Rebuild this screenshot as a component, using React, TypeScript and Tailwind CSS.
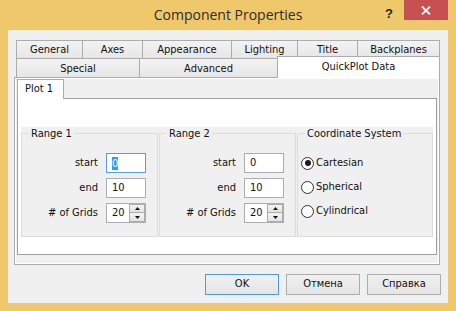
import React from 'react';

const ui = "font-['DejaVu_Sans_Condensed','Liberation_Sans',sans-serif] text-[11px] text-[#111]";

const Tab = ({ label, className }: { label: string; className: string }) => (
    <div className={`h-full flex items-center justify-center border-t border-l border-[#ACACAC] bg-gradient-to-b from-[#F3F3F3] to-[#E6E6E6] leading-none ${className}`}>
        {label}
    </div>
);

const Field = ({ label, value, focused, spin }: { label: string; value: string; focused?: boolean; spin?: boolean }) => (
    <div className="flex items-center justify-end gap-[8px] pr-[11px] h-[20px]">
        <span>{label}</span>
        <div className={`relative w-[40px] h-[20px] bg-white border flex items-center pl-[5px] ${focused ? 'border-[#569DE5]' : 'border-[#ABADB3]'}`}>
            {focused ? <span className="bg-[#3399FF] text-white leading-[13px]">{value}</span> : <span>{value}</span>}
            {spin && (
                <div className="absolute right-0 top-0 bottom-0 w-[16px] flex flex-col">
                    <div className="h-[9px] border border-[#ACACAC] bg-gradient-to-b from-[#F4F4F4] to-[#E3E3E3] flex items-center justify-center">
                        <svg width="5" height="3" viewBox="0 0 5 3"><path d="M0 3 L2.5 0 L5 3 Z" fill="#111" /></svg>
                    </div>
                    <div className="h-[9px] border border-t-0 border-[#ACACAC] bg-gradient-to-b from-[#F4F4F4] to-[#E3E3E3] flex items-center justify-center">
                        <svg width="5" height="3" viewBox="0 0 5 3"><path d="M0 0 L2.5 3 L5 0 Z" fill="#111" /></svg>
                    </div>
                </div>
            )}
        </div>
    </div>
);

const RangeGroup = ({ title, focused, className }: { title: string; focused?: boolean; className: string }) => (
    <fieldset className={`border border-[#DCDCDC] h-[110px] ${className}`}>
        <legend className="ml-[7px] px-[2px] leading-[13px]">{title}</legend>
        <div className="flex flex-col gap-[5px] pt-[13px]">
            <Field label="start" value="0" focused={focused} />
            <Field label="end" value="10" />
            <Field label="# of Grids" value="20" spin />
        </div>
    </fieldset>
);

const Radio = ({ label, checked }: { label: string; checked?: boolean }) => (
    <div className="h-[24px] flex items-center gap-[2px] pl-[3px]">
        <div className="w-[13px] h-[13px] rounded-full border border-[#333] bg-white flex items-center justify-center">
            {checked && <div className="w-[6px] h-[6px] rounded-full bg-[#1A1A1A]" />}
        </div>
        <span>{label}</span>
    </div>
);

const Button = ({ label, primary }: { label: string; primary?: boolean }) => (
    <button className={`w-[74px] h-[21px] border bg-gradient-to-b from-[#F0F0F0] to-[#E5E5E5] flex items-center justify-center ${primary ? 'border-[#4A9BE0]' : 'border-[#ACACAC]'}`}>
        {label}
    </button>
);

export default function App() {
    return (
        <div className={`w-[456px] h-[311px] bg-[#EFC86B] flex flex-col ${ui}`}>
            <div className="relative h-[30px] flex items-center justify-center">
                <span className="font-['Open_Sans',sans-serif] text-[14px] text-[#2B2B2B] pb-[1px]">Component Properties</span>
                <span className="absolute left-[385px] top-[4px] font-['Liberation_Sans',sans-serif] font-bold text-[13px] text-[#222]">?</span>
                <div className="absolute right-[8px] top-0 w-[44px] h-[20px] bg-[#C75050] flex items-center justify-center">
                    <svg width="10" height="9" viewBox="0 0 10 9">
                        <path d="M1 0.5 L9 8.5 M9 0.5 L1 8.5" stroke="#fff" strokeWidth="1.8" />
                    </svg>
                </div>
            </div>

            <div className="mx-[8px] h-[273px] bg-[#F0F0F0] flex flex-col">
                <div className="mt-[10px] ml-[6px] w-[426px] flex flex-col">
                    <div className="flex pl-[2px] h-[18px]">
                        <Tab label="General" className="w-[66px]" />
                        <Tab label="Axes" className="w-[60px]" />
                        <Tab label="Appearance" className="w-[89px]" />
                        <Tab label="Lighting" className="w-[66px]" />
                        <Tab label="Title" className="w-[60px]" />
                        <Tab label="Backplanes" className="w-[83px] border-r" />
                    </div>
                    <div className="flex pl-[2px] h-[19px]">
                        <Tab label="Special" className="w-[123px]" />
                        <Tab label="Advanced" className="w-[138px]" />
                        <div className="relative z-10 w-[163px] h-[22px] -mt-[2px] bg-white border-t border-l border-r border-[#ACACAC] flex items-center justify-center">
                            QuickPlot Data
                        </div>
                    </div>
                    <div className="h-[188px] border border-[#ACACAC] bg-white p-[1px]">
                        <div className="h-full bg-[#F0F0F0] pl-[1px] flex flex-col">
                            <div className="flex">
                                <div className="relative z-10 w-[47px] h-[20px] bg-white border-t border-l border-r border-[#ACACAC] flex items-center pl-[7px]">
                                    Plot 1
                                </div>
                            </div>
                            <div className="-mt-[1px] w-[420px] h-[157px] border border-[#A0A0A0] bg-white pl-[3px] pt-[28px]">
                                <div className="w-[412px] h-[110px] bg-[#F0F0F0] flex gap-[1px]">
                                    <RangeGroup title="Range 1" focused className="w-[137px]" />
                                    <RangeGroup title="Range 2" className="w-[137px]" />
                                    <fieldset className="border border-[#DCDCDC] h-[110px] w-[136px]">
                                        <legend className="ml-[7px] px-[2px] leading-[13px]">Coordinate System</legend>
                                        <div className="flex flex-col pt-[11px]">
                                            <Radio label="Cartesian" checked />
                                            <Radio label="Spherical" />
                                            <Radio label="Cylindrical" />
                                        </div>
                                    </fieldset>
                                </div>
                            </div>
                        </div>
                    </div>
                </div>

                <div className="mt-[9px] flex justify-end gap-[7px] pr-[7px]">
                    <Button label="OK" primary />
                    <Button label="Отмена" />
                    <Button label="Справка" />
                </div>
            </div>
        </div>
    );
}
